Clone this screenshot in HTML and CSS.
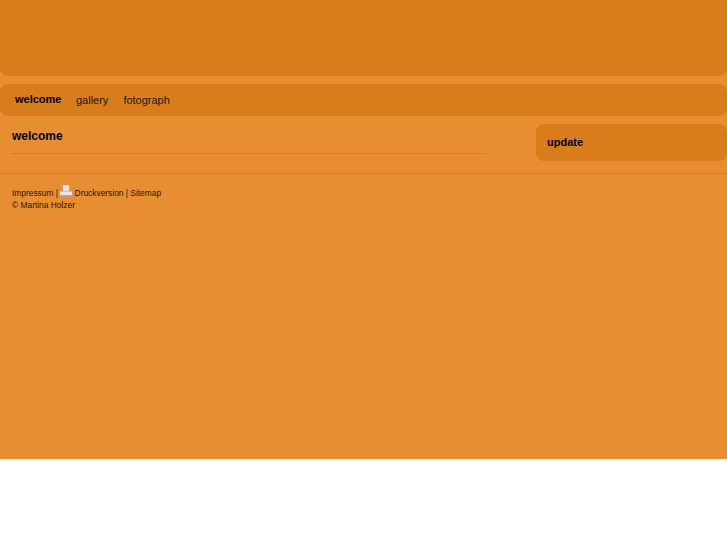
FILE: index.html
```html
<!DOCTYPE html>
<html>

<head>
	<meta charset="utf-8">
	<title>welcome</title>
	<link rel="stylesheet" href="styles.css">
</head>

<body>
	<div class="page">
		<div class="header"></div>
		<div class="nav">
			<a class="nav-item active" href="#">welcome</a>
			<a class="nav-item" href="#">gallery</a>
			<a class="nav-item" href="#">fotograph</a>
		</div>
		<div class="main">
			<div class="content">
				<h1>welcome</h1>
				<div class="rule"></div>
			</div>
			<div class="sidebar">
				<h2>update</h2>
			</div>
		</div>
		<div class="footer">
			<p>
				<a href="#">Impressum</a> |
				<svg class="print" width="12" height="12" viewBox="0 0 12 12">
					<path d="M3 0h6v6H3z" fill="#f4f4f4" stroke="#b9b9c4" stroke-width="0.6"/>
					<path d="M4 2h4M4 4h4" stroke="#c4c4cc" stroke-width="0.7"/>
					<path d="M0 6.5h12V11H0z" fill="#e6e6ea"/>
					<path d="M0 10h12v1.5H0z" fill="#a9a9b4"/>
				</svg>
				<a href="#">Druckversion</a> | <a href="#">Sitemap</a>
			</p>
			<p>© Martina Holzer</p>
		</div>
	</div>
</body>

</html>
```

FILE: styles.css
```css
html {
	background-color: white;
}

body {
	font-family: "Liberation Sans", Arial, sans-serif;
	color: black;
	margin: 0px;
	padding: 0px;
}

a {
	text-decoration: none;
	color: #2a1600;
}

.page {
	height: 459px;
	background-color: #e88e32;
	overflow: hidden;
}

.header {
	height: 76px;
	background-color: #d97c1b;
	border-radius: 0px 0px 8px 8px;
}

.nav {
	display: flex;
	gap: 15px;
	height: 32px;
	margin-top: 8px;
	padding-left: 15px;
	align-items: center;
	background-color: #d97c1b;
	border-radius: 8px;
}

.nav-item {
	font-size: 11px;
}

.active {
	font-weight: bold;
	color: black;
	margin-right: -0.5px;
	padding-bottom: 2px;
}

.main {
	display: flex;
	justify-content: space-between;
	height: 57px;
	border-bottom: 1px solid #d97c1b;
}

.content {
	width: 475px;
	margin-left: 11px;
}

h1 {
	font-size: 12px;
	line-height: 14px;
	margin: 0px;
	padding-top: 13px;
	padding-bottom: 10px;
	padding-left: 1px;
}

.rule {
	height: 1px;
	background-color: #d97c1b;
}

.sidebar {
	width: 180px;
	height: 37px;
	margin-top: 8px;
	padding-left: 11px;
	background-color: #d97c1b;
	border-radius: 8px;
}

h2 {
	font-size: 11px;
	line-height: 14px;
	margin: 0px;
	padding-top: 11px;
}

.footer {
	padding-top: 14px;
	padding-left: 12px;
	font-size: 8.4px;
	line-height: 11.5px;
	color: #2a1600;
}

.footer p {
	margin: 0px;
}

.print {
	vertical-align: -1px;
	margin-top: -4px;
}
```
